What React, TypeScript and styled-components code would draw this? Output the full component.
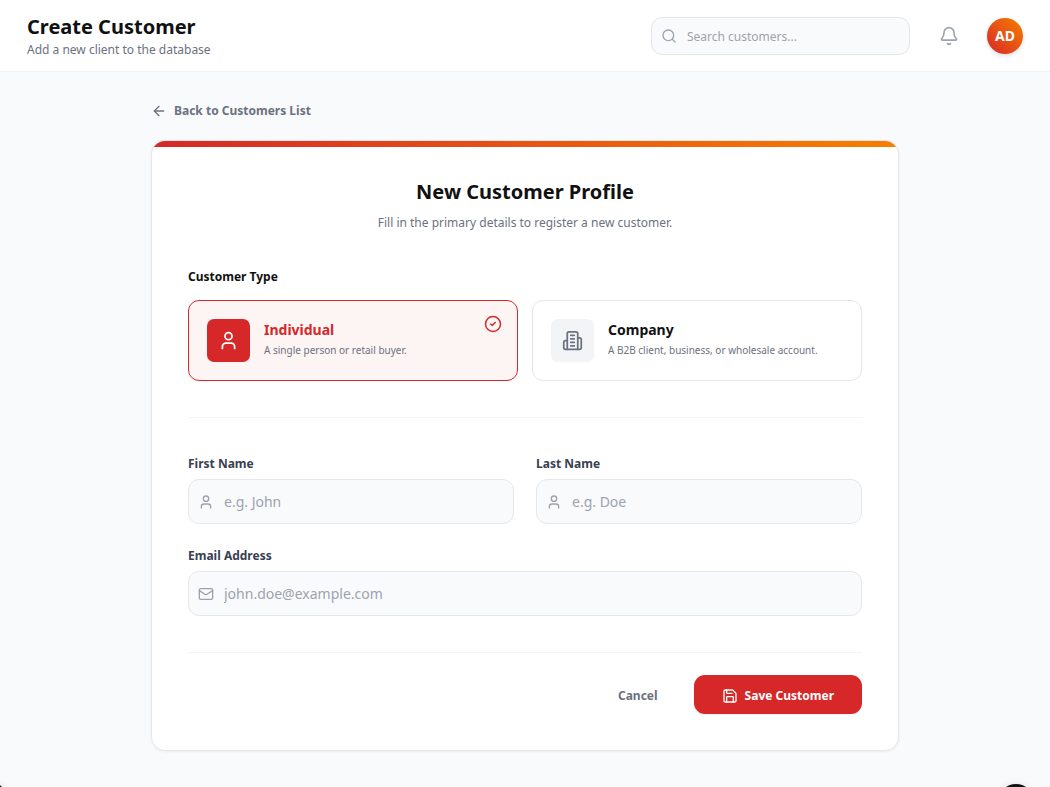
import React, { useState } from "react";
import styled, { createGlobalStyle } from "styled-components";
import { ArrowLeft, Bell, Mail, Save, Search, User, CircleCheck } from "lucide-react";

const GlobalStyle = createGlobalStyle`
  *, *::before, *::after { box-sizing: border-box; }
  body {
    margin: 0;
    background: #f9fafb;
    color: #111111;
    font-family: "Segoe UI", "Noto Sans", sans-serif;
    font-size: 14px;
    line-height: 18px;
  }
  button, input { font: inherit; }
  h1, h2, p { margin: 0; }
  svg { display: block; flex: none; }
`;

const Page = styled.div`
  min-height: 100vh;
  background: #f9fafb;
`;

const TopBar = styled.header`
  display: flex;
  align-items: center;
  justify-content: space-between;
  height: 72px;
  padding: 0 27px;
  background: #ffffff;
  border-bottom: 1px solid #f1f3f5;
`;

const Heading = styled.div`
  padding-top: 3px;
`;

const PageTitle = styled.h1`
  font-size: 20px;
  line-height: 26px;
  font-weight: 700;
`;

const PageSubtitle = styled.p`
  font-size: 12px;
  line-height: 20px;
  color: #6b7280;
`;

const Tools = styled.div`
  display: flex;
  align-items: center;
  gap: 28px;
`;

const Control = styled.div<{ $compact?: boolean }>`
  display: flex;
  align-items: center;
  gap: 10px;
  width: ${(p) => (p.$compact ? "259px" : "auto")};
  height: ${(p) => (p.$compact ? "38px" : "45px")};
  padding: ${(p) => (p.$compact ? "0 9px" : "1px 9px 0")};
  background: #f9fafb;
  border: 1px solid #e5e7eb;
  border-radius: 11px;
  color: #9ca3af;
  &:focus-within { border-color: #d62828; }
`;

const TextInput = styled.input<{ $small?: boolean }>`
  flex: 1;
  min-width: 0;
  padding: ${(p) => (p.$small ? "2px 0 0" : "0")};
  border: 0;
  outline: 0;
  background: transparent;
  color: #111111;
  font-size: ${(p) => (p.$small ? "12px" : "14px")};
  &::placeholder { color: #9ca3af; opacity: 1; }
`;

const BellButton = styled.button`
  display: flex;
  justify-content: flex-end;
  width: 21px;
  padding: 0;
  border: 0;
  background: none;
  color: #9ca3af;
  cursor: pointer;
`;

const Avatar = styled.button`
  width: 36px;
  height: 36px;
  padding: 0;
  border: 0;
  border-radius: 50%;
  background: linear-gradient(45deg, #d62828, #f77f00);
  box-shadow: 0 2px 4px rgba(0, 0, 0, 0.12);
  color: #ffffff;
  font-size: 14px;
  font-weight: 700;
  cursor: pointer;
`;

const Main = styled.main`
  max-width: 748px;
  margin: 0 auto;
  padding: 29px 0 36px;
`;

const BackLink = styled.a`
  display: flex;
  align-items: center;
  gap: 7px;
  width: fit-content;
  color: #6b7280;
  font-size: 12px;
  line-height: 20px;
  font-weight: 700;
  text-decoration: none;
`;

const Card = styled.form`
  margin-top: 19px;
  overflow: hidden;
  background: #ffffff;
  border: 1px solid #e5e7eb;
  border-radius: 14px;
  box-shadow: 0 1px 3px rgba(0, 0, 0, 0.06);
  &::before {
    content: "";
    display: block;
    height: 6px;
    background: linear-gradient(90deg, #d62828, #f77f00);
  }
`;

const CardBody = styled.div`
  padding: 30px 36px 36px;
`;

const CardHeading = styled.div`
  text-align: center;
`;

const CardTitle = styled.h2`
  font-size: 20px;
  line-height: 30px;
  font-weight: 700;
`;

const CardText = styled.p`
  margin-top: 7px;
  font-size: 12px;
  line-height: 18px;
  color: #6b7280;
`;

const TypeGroup = styled.fieldset`
  margin: 35px 0 0;
  padding: 0;
  border: 0;
  min-width: 0;
`;

const TypeLegend = styled.legend`
  padding: 0;
  margin-bottom: 13px;
  font-size: 12px;
  line-height: 20px;
  font-weight: 700;
`;

const TypeGrid = styled.div`
  display: grid;
  grid-template-columns: 1fr 1fr;
  gap: 14px;
`;

const TypeOption = styled.label<{ $active: boolean }>`
  position: relative;
  display: flex;
  align-items: center;
  gap: 14px;
  padding: 18px;
  border: 1px solid ${(p) => (p.$active ? "#d62828" : "#e5e7eb")};
  border-radius: 11px;
  background: ${(p) => (p.$active ? "#fdf4f4" : "#ffffff")};
  cursor: pointer;
`;

const TypeRadio = styled.input`
  position: absolute;
  inset: 0;
  width: 100%;
  height: 100%;
  margin: 0;
  opacity: 0;
  cursor: pointer;
`;

const TypeIcon = styled.span<{ $active: boolean }>`
  display: grid;
  place-items: center;
  width: 43px;
  height: 43px;
  border-radius: 7px;
  background: ${(p) => (p.$active ? "#d62828" : "#f3f4f6")};
  color: ${(p) => (p.$active ? "#ffffff" : "#6b7280")};
`;

const TypeText = styled.span`
  padding-bottom: 1px;
`;

const TypeName = styled.span<{ $active: boolean }>`
  display: block;
  font-size: 14px;
  line-height: 20px;
  font-weight: 700;
  color: ${(p) => (p.$active ? "#d62828" : "#111111")};
`;

const TypeHint = styled.span`
  display: block;
  font-size: 10px;
  line-height: 20px;
  color: #6b7280;
`;

const SelectedMark = styled.span`
  position: absolute;
  top: 14px;
  right: 15px;
  color: #d62828;
`;

const Divider = styled.hr`
  height: 1px;
  margin: 36px 0;
  border: 0;
  background: #f3f4f6;
`;

const FieldGrid = styled.div`
  display: grid;
  grid-template-columns: 1fr 1fr;
  gap: 22px;
`;

const Field = styled.div<{ $wide?: boolean }>`
  grid-column: ${(p) => (p.$wide ? "1 / -1" : "auto")};
`;

const FieldLabel = styled.label`
  display: block;
  margin-bottom: 5px;
  font-size: 12px;
  line-height: 20px;
  font-weight: 700;
  color: #374151;
`;

const Actions = styled.div`
  display: flex;
  justify-content: flex-end;
  gap: 14px;
  margin-top: 36px;
  padding-top: 22px;
  border-top: 1px solid #f3f4f6;
`;

const ActionButton = styled.button<{ $primary?: boolean }>`
  display: flex;
  align-items: center;
  justify-content: center;
  gap: 7px;
  height: 39px;
  padding: 2px ${(p) => (p.$primary ? "28px" : "22px")} 0;
  border: 0;
  border-radius: 11px;
  background: ${(p) => (p.$primary ? "#d62828" : "transparent")};
  box-shadow: ${(p) => (p.$primary ? "0 1px 2px rgba(0, 0, 0, 0.06)" : "none")};
  color: ${(p) => (p.$primary ? "#ffffff" : "#6b7280")};
  font-size: 12px;
  font-weight: 700;
  cursor: pointer;
`;

const FloatingDot = styled.span<{ $side: "left" | "right" }>`
  position: fixed;
  ${(p) => (p.$side === "left" ? "left: -32px;" : "right: 16px;")}
  bottom: ${(p) => (p.$side === "left" ? "-32px" : "-33px")};
  width: 36px;
  height: 36px;
  border-radius: ${(p) => (p.$side === "left" ? "10px" : "50%")};
  background: #111111;
  box-shadow: 0 2px 8px rgba(0, 0, 0, 0.15);
`;

const BuildingIcon = () => (
  <svg width="21" height="21" viewBox="0 0 24 24" fill="none" stroke="currentColor" strokeWidth="2" strokeLinecap="round" strokeLinejoin="round" aria-hidden="true">
    <path d="M6 22V4a2 2 0 0 1 2-2h8a2 2 0 0 1 2 2v18Z" />
    <path d="M6 12H4a2 2 0 0 0-2 2v6a2 2 0 0 0 2 2h2" />
    <path d="M18 9h2a2 2 0 0 1 2 2v9a2 2 0 0 1-2 2h-2" />
    <path d="M10 6h4M10 10h4M10 14h4M10 18h4" />
  </svg>
);

type CustomerType = "individual" | "company";

const customerTypes: { id: CustomerType; name: string; hint: string; icon: React.ReactNode }[] = [
  { id: "individual", name: "Individual", hint: "A single person or retail buyer.", icon: <User size={21} /> },
  { id: "company", name: "Company", hint: "A B2B client, business, or wholesale account.", icon: <BuildingIcon /> },
];

export default function App() {
  const [type, setType] = useState<CustomerType>("individual");

  return (
    <Page>
      <GlobalStyle />
      <TopBar>
        <Heading>
          <PageTitle>Create Customer</PageTitle>
          <PageSubtitle>Add a new client to the database</PageSubtitle>
        </Heading>
        <Tools>
          <Control $compact>
            <Search size={16} />
            <TextInput $small type="search" aria-label="Search customers" placeholder="Search customers..." />
          </Control>
          <BellButton type="button" aria-label="Notifications">
            <Bell size={20} />
          </BellButton>
          <Avatar type="button">AD</Avatar>
        </Tools>
      </TopBar>

      <Main>
        <BackLink href="#customers">
          <ArrowLeft size={16} />
          Back to Customers List
        </BackLink>

        <Card onSubmit={(e) => e.preventDefault()}>
          <CardBody>
            <CardHeading>
              <CardTitle>New Customer Profile</CardTitle>
              <CardText>Fill in the primary details to register a new customer.</CardText>
            </CardHeading>

            <TypeGroup>
              <TypeLegend>Customer Type</TypeLegend>
              <TypeGrid>
                {customerTypes.map(({ id, name, hint, icon }) => {
                  const active = type === id;
                  return (
                    <TypeOption key={id} $active={active}>
                      <TypeRadio type="radio" name="customerType" value={id} checked={active} onChange={() => setType(id)} />
                      <TypeIcon $active={active}>{icon}</TypeIcon>
                      <TypeText>
                        <TypeName $active={active}>{name}</TypeName>
                        <TypeHint>{hint}</TypeHint>
                      </TypeText>
                      {active && (
                        <SelectedMark>
                          <CircleCheck size={18} />
                        </SelectedMark>
                      )}
                    </TypeOption>
                  );
                })}
              </TypeGrid>
            </TypeGroup>

            <Divider />

            <FieldGrid>
              <Field>
                <FieldLabel htmlFor="firstName">First Name</FieldLabel>
                <Control>
                  <User size={16} />
                  <TextInput id="firstName" type="text" placeholder="e.g. John" />
                </Control>
              </Field>
              <Field>
                <FieldLabel htmlFor="lastName">Last Name</FieldLabel>
                <Control>
                  <User size={16} />
                  <TextInput id="lastName" type="text" placeholder="e.g. Doe" />
                </Control>
              </Field>
              <Field $wide>
                <FieldLabel htmlFor="email">Email Address</FieldLabel>
                <Control>
                  <Mail size={16} />
                  <TextInput id="email" type="email" placeholder="john.doe@example.com" />
                </Control>
              </Field>
            </FieldGrid>

            <Actions>
              <ActionButton type="button">Cancel</ActionButton>
              <ActionButton $primary type="submit">
                <Save size={16} />
                Save Customer
              </ActionButton>
            </Actions>
          </CardBody>
        </Card>
      </Main>
      <FloatingDot $side="left" />
      <FloatingDot $side="right" />
    </Page>
  );
}
